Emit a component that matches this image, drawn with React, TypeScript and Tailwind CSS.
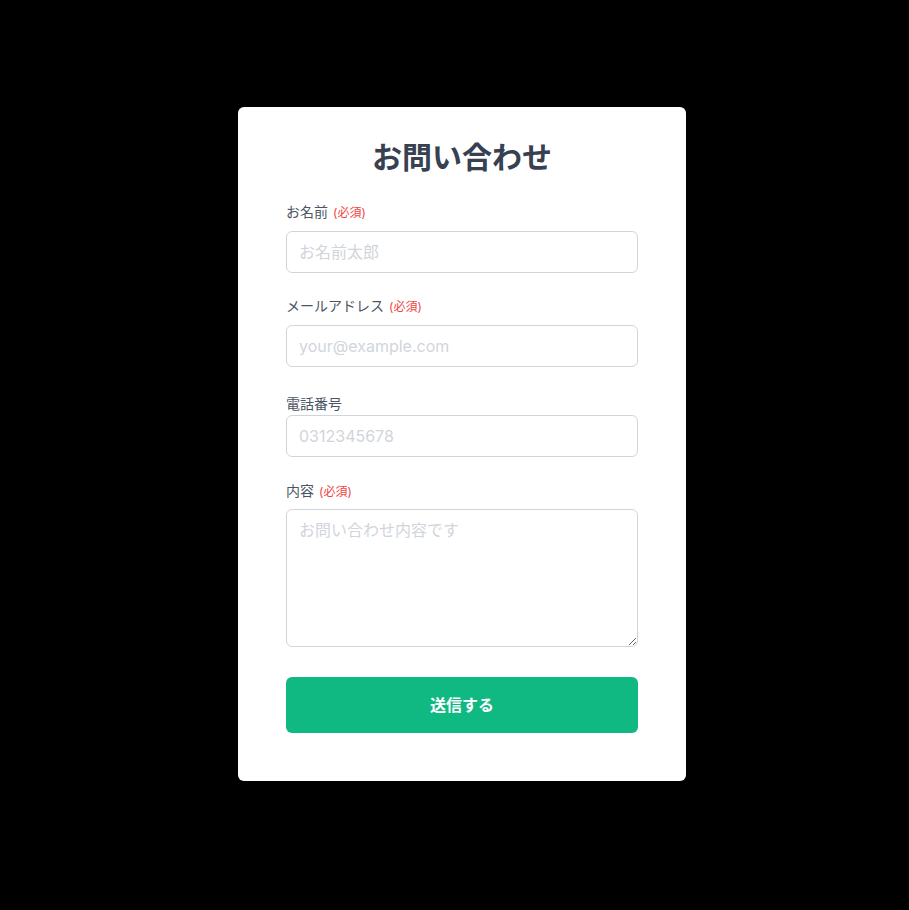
import React from 'react'

const font = { fontFamily: 'Inter, "Noto Sans CJK JP", sans-serif' }

function Label({ text, required, className }: { text: string; required?: boolean; className: string }) {
  return (
    <label className={`block text-sm leading-5 text-[#4b5563] ${className}`}>
      {text}
      {required && <span className="ml-[5px] text-xs text-[#ef4444]">(必須)</span>}
    </label>
  )
}

const inputCls =
  'block w-full rounded-md border border-[#d1d5db] bg-white px-3 py-2 text-base leading-6 text-[#374151] placeholder:text-[#d1d5db] outline-none'

export default function App() {
  return (
    <div className="min-h-screen bg-black flex justify-center items-start pt-[107px] pl-[15px]" style={font}>
      <div className="w-[448px] bg-white rounded-md px-12 pt-8 pb-12">
        <h1 className="text-3xl leading-9 font-bold text-[#374151] text-center mb-[27px]">お問い合わせ</h1>
        <form onSubmit={(e) => e.preventDefault()}>
          <Label text="お名前" required className="mb-[9px]" />
          <input className={`${inputCls} mb-[23px]`} placeholder="お名前太郎" />

          <Label text="メールアドレス" required className="mb-[9px]" />
          <input className={`${inputCls} mb-[27px]`} placeholder="your@example.com" />

          <Label text="電話番号" className="mb-[1px]" />
          <input className={`${inputCls} mb-6`} placeholder="0312345678" />

          <Label text="内容" required className="mb-2" />
          <textarea className={`${inputCls} mb-[30px]`} rows={5} placeholder="お問い合わせ内容です" />

          <button
            type="submit"
            className="block w-full rounded-md bg-[#10b981] py-4 text-base leading-6 font-bold text-white"
          >
            送信する
          </button>
        </form>
      </div>
    </div>
  )
}
